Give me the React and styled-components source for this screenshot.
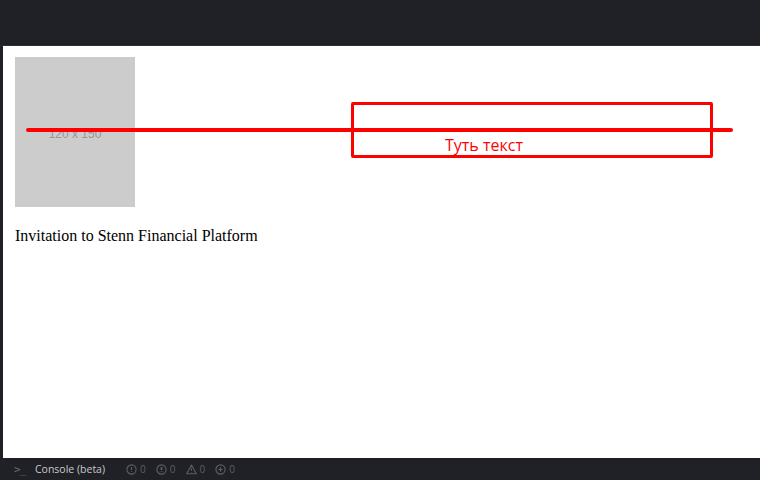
import React from "react";
import styled, { createGlobalStyle } from "styled-components";

const GlobalStyle = createGlobalStyle`
  html, body { margin: 0; padding: 0; background: #1f2126; }
  * { box-sizing: border-box; }
`;

const Frame = styled.div`
  width: 760px;
  height: 480px;
  display: flex;
  flex-direction: column;
  background: #1f2126;
  overflow: hidden;
`;

const TopBar = styled.div`
  height: 46px;
  flex: none;
  background: #1f2126;
  border-bottom: 1px solid #2c2f35;
`;

const Main = styled.div`
  flex: 1;
  display: flex;
  min-height: 0;
`;

const LeftStrip = styled.div`
  width: 3px;
  flex: none;
  background: #1f2126;
`;

const Preview = styled.div`
  flex: 1;
  position: relative;
  background: #ffffff;
  padding: 11px 12px;
`;

const Row = styled.div`
  display: flex;
  align-items: flex-start;
`;

const Placeholder = styled.div`
  width: 120px;
  height: 150px;
  flex: none;
  background: #cccccc;
  color: #969696;
  font-family: "Liberation Sans", Arial, sans-serif;
  font-size: 12px;
  display: flex;
  align-items: center;
  justify-content: center;
  padding-top: 4px;
`;

const RedBox = styled.div`
  margin-left: 216px;
  margin-top: 45px;
  width: 362px;
  height: 56px;
  border: 3px solid #ff0000;
  border-radius: 2px;
  display: flex;
  align-items: flex-end;
  padding-left: 91px;
  color: #ff0000;
  font-family: "Open Sans", "Noto Sans", sans-serif;
  font-size: 16px;
  line-height: 20px;
`;

const Caption = styled.div`
  margin-top: 20px;
  font-family: "Liberation Serif", "Times New Roman", serif;
  font-size: 16px;
  color: #000;
`;

const RedLine = styled.div`
  position: absolute;
  left: 23px;
  top: 82px;
  width: 707px;
  height: 4px;
  border-radius: 2px;
  background: #ff0000;
`;

const BottomBar = styled.div`
  height: 22px;
  flex: none;
  background: #1f2126;
  display: flex;
  align-items: center;
  padding-left: 14px;
  font-family: "Open Sans", "Noto Sans", sans-serif;
  font-size: 10.5px;
  color: #c8c8c8;
`;

const Prompt = styled.span`
  color: #6b6e74;
  font-family: "DejaVu Sans Mono", monospace;
  font-size: 11px;
  letter-spacing: -1px;
  width: 21px;
`;

const ConsoleLabel = styled.span`
  margin-right: 21px;
`;

const Counter = styled.span`
  display: flex;
  align-items: center;
  gap: 3px;
  margin-right: 10px;
  color: #5c5f65;
  font-size: 10px;
`;

const CircleIcon = ({ kind }) => (
  <svg width="11" height="11" viewBox="0 0 12 12" fill="none" stroke="#5c5f65" strokeWidth="1.2">
    {kind === "tri" ? (
      <>
        <path d="M6 1.2 L11.2 10.6 H0.8 Z" strokeLinejoin="round" />
        <path d="M6 4.6 V7.4 M6 8.6 V9.2" />
      </>
    ) : (
      <>
        <circle cx="6" cy="6" r="5" />
        {kind === "err" && <path d="M6 3.2 V6.6 M6 8 V8.8" />}
        {kind === "warn" && <path d="M6 3.2 V6.6 M6 8 V8.8" strokeWidth="1.8" />}
        {kind === "info" && <path d="M3.6 6 H8.4 M6 3.6 V8.4" />}
      </>
    )}
  </svg>
);

export default function App() {
  return (
    <>
      <GlobalStyle />
      <Frame>
        <TopBar />
        <Main>
          <LeftStrip />
          <Preview>
            <Row>
              <Placeholder>120 x 150</Placeholder>
              <RedBox>Туть текст</RedBox>
            </Row>
            <Caption>Invitation to Stenn Financial Platform</Caption>
            <RedLine />
          </Preview>
        </Main>
        <BottomBar>
          <Prompt>&gt;_</Prompt>
          <ConsoleLabel>Console (beta)</ConsoleLabel>
          <Counter><CircleIcon kind="err" />0</Counter>
          <Counter><CircleIcon kind="warn" />0</Counter>
          <Counter><CircleIcon kind="tri" />0</Counter>
          <Counter><CircleIcon kind="info" />0</Counter>
        </BottomBar>
      </Frame>
    </>
  );
}
